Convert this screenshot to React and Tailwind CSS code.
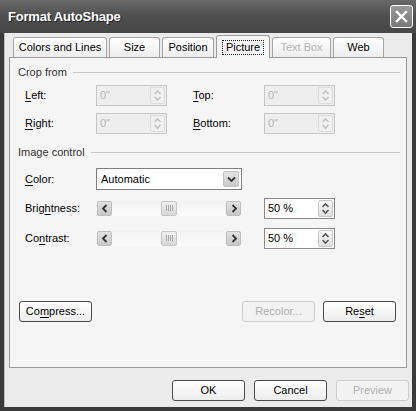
import React from 'react';

const font = { fontFamily: '"Liberation Sans", Arial, sans-serif' };

function Acc({ text, i }) {
  // underline the access key letter at index i
  return (
    <span>
      {text.slice(0, i)}
      <span className="underline underline-offset-2">{text[i]}</span>
      {text.slice(i + 1)}
    </span>
  );
}

function Spinner({ disabled }) {
  const c = disabled ? '#c4c4c4' : '#555';
  return (
    <div className={`w-[15px] h-full flex flex-col items-center justify-center rounded-[2px] border ${disabled ? 'border-[#dcdcdc] bg-[#f0f0f0]' : 'border-[#c9c9c9] bg-gradient-to-b from-[#fafafa] to-[#dedede]'}`}>
      <svg width="9" height="13" viewBox="0 0 9 13">
        <path d="M1.5 5 L4.5 2 L7.5 5" fill="none" stroke={c} strokeWidth="1.6" />
        <path d="M1.5 8 L4.5 11 L7.5 8" fill="none" stroke={c} strokeWidth="1.6" />
      </svg>
    </div>
  );
}

function SpinBox({ value, disabled }) {
  return (
    <div className={`w-[71px] h-[21px] flex items-center border pl-[3px] pr-[1px] py-[1px] ${disabled ? 'border-[#c6c6c6] bg-[#eeeeee] text-[#b4b4b4]' : 'border-[#8a8a8a] bg-white text-black'}`}>
      <span className="flex-1 text-[11px] leading-none">{value}</span>
      <Spinner disabled={disabled} />
    </div>
  );
}

function Arrow({ dir }) {
  return (
    <div className="w-[15px] h-[15px] flex items-center justify-center rounded-[2px] border border-[#bdbdbd] bg-gradient-to-b from-[#e2e2e2] to-[#c8c8c8]">
      <svg width="8" height="9" viewBox="0 0 8 9">
        <path d={dir === 'l' ? 'M5.5 1 L2 4.5 L5.5 8' : 'M2.5 1 L6 4.5 L2.5 8'} fill="none" stroke="#333" strokeWidth="1.8" />
      </svg>
    </div>
  );
}

function Slider() {
  return (
    <div className="w-[144px] h-[15px] flex items-center bg-gradient-to-b from-[#f2f2f2] to-[#fbfbfb]">
      <Arrow dir="l" />
      <div className="flex-1 h-full flex items-center pl-[49px]">
        <div className="w-[16px] h-[15px] rounded-[2px] border border-[#c6c6c6] bg-gradient-to-b from-[#f0f0f0] to-[#d6d6d6] flex items-center justify-center gap-[1px]">
          <span className="w-px h-[6px] bg-[#a8a8a8]" />
          <span className="w-px h-[6px] bg-[#a8a8a8]" />
          <span className="w-px h-[6px] bg-[#a8a8a8]" />
          <span className="w-px h-[6px] bg-[#a8a8a8]" />
        </div>
      </div>
      <Arrow dir="r" />
    </div>
  );
}

function Button({ children, disabled }) {
  return (
    <div className={`w-[73px] h-[21px] flex items-center justify-center rounded-[3px] border text-[11px] ${disabled ? 'border-[#cdcdcd] text-[#b0b0b0] bg-[#f2f2f2]' : 'border-[#4a4a4a] text-black bg-gradient-to-b from-white to-[#ececec]'}`}>
      {children}
    </div>
  );
}

function Tab({ label, w, disabled }) {
  return (
    <div className={`h-[20px] flex items-center justify-center border border-b-0 border-[#a5a5a5] rounded-t-[3px] bg-gradient-to-b from-white to-[#ededed] ${disabled ? 'text-[#b3b3b3]' : 'text-black'}`} style={{ width: w }}>
      {label}
    </div>
  );
}

function Group({ title }) {
  return (
    <div className="flex items-center h-[14px] pl-[8px] pr-[6px] text-[#333]">
      <span className="mr-[6px]">{title}</span>
      <div className="flex-1 h-px bg-[#c8c8c8]" />
    </div>
  );
}

export default function App() {
  return (
    <div className="w-[416px] h-[411px] flex flex-col bg-[#3a3a3a] text-[11px] text-black overflow-hidden" style={font}>
      {/* Title bar */}
      <div className="h-[33px] flex items-center justify-between pl-[8px] pr-[3px] bg-gradient-to-b from-[#6a6a6a] via-[#4e4e4e] to-[#474747]">
        <span className="text-white font-bold text-[13px] tracking-[-0.2px]" style={{ textShadow: '1px 1px 0 #222' }}>Format AutoShape</span>
        <div className="w-[23px] h-[23px] rounded-[3px] border border-white bg-gradient-to-b from-[#9a9a9a] to-[#777] flex items-center justify-center">
          <svg width="13" height="13" viewBox="0 0 13 13">
            <path d="M2 2 L11 11 M11 2 L2 11" stroke="white" strokeWidth="2.4" strokeLinecap="square" />
          </svg>
        </div>
      </div>

      {/* Body */}
      <div className="flex-1 mx-[4px] mb-[4px] bg-[#ebebeb] flex flex-col border-l border-[#bdbdbd]">
        {/* Tabs */}
        <div className="flex items-end gap-[2px] pl-[8px] pt-[2px] h-[24px]">
          <Tab label="Colors and Lines" w={94} />
          <Tab label="Size" w={51} />
          <Tab label="Position" w={52} />
          <div className="w-[54px] h-[23px] -mb-px flex items-center justify-center border border-b-0 border-[#9a9a9a] rounded-t-[3px] bg-[#f5f5f5] relative z-10">
            <span className="border border-dotted border-[#222] px-[3px] leading-[13px]">Picture</span>
          </div>
          <Tab label="Text Box" w={59} disabled />
          <Tab label="Web" w={51} />
        </div>

        {/* Panel */}
        <div className="ml-[4px] mr-[5px] h-[311px] border border-[#9a9a9a] bg-[#f5f5f5] flex flex-col pt-[7px]">
          <Group title="Crop from" />
          <div className="flex items-center h-[21px] mt-[6px]">
            <span className="w-[86px] pl-[15px]"><Acc text="Left:" i={0} /></span>
            <SpinBox value={'0"'} disabled />
            <span className="w-[97px] pl-[26px]"><Acc text="Top:" i={0} /></span>
            <SpinBox value={'0"'} disabled />
          </div>
          <div className="flex items-center h-[21px] mt-[7px]">
            <span className="w-[86px] pl-[15px]"><Acc text="Right:" i={0} /></span>
            <SpinBox value={'0"'} disabled />
            <span className="w-[97px] pl-[26px]"><Acc text="Bottom:" i={0} /></span>
            <SpinBox value={'0"'} disabled />
          </div>

          <div className="mt-[11px]">
            <Group title="Image control" />
          </div>
          <div className="flex items-center h-[22px] mt-[9px]">
            <span className="w-[86px] pl-[15px]"><Acc text="Color:" i={0} /></span>
            <div className="w-[146px] h-[22px] flex items-center border border-[#7f7f7f] bg-white pl-[4px] pr-[2px] py-[2px]">
              <span className="flex-1">Automatic</span>
              <div className="w-[16px] h-full flex items-center justify-center rounded-[2px] border border-[#c3c3c3] bg-gradient-to-b from-[#e4e4e4] to-[#c9c9c9]">
                <svg width="9" height="7" viewBox="0 0 9 7">
                  <path d="M1 1.5 L4.5 5 L8 1.5" fill="none" stroke="#333" strokeWidth="1.8" />
                </svg>
              </div>
            </div>
          </div>
          <div className="flex items-center h-[20px] mt-[8px]">
            <span className="w-[87px] pl-[15px]"><Acc text="Brightness:" i={4} /></span>
            <Slider />
            <div className="w-[23px]" />
            <SpinBox value="50 %" />
          </div>
          <div className="flex items-center h-[20px] mt-[10px]">
            <span className="w-[87px] pl-[15px]"><Acc text="Contrast:" i={2} /></span>
            <Slider />
            <div className="w-[23px]" />
            <SpinBox value="50 %" />
          </div>

          <div className="flex items-center mt-[53px] pl-[9px]">
            <Button><Acc text="Compress..." i={2} /></Button>
            <div className="w-[150px]" />
            <Button disabled>Recolor...</Button>
            <div className="w-[8px]" />
            <Button><Acc text="Reset" i={2} /></Button>
          </div>
        </div>

        {/* Footer buttons */}
        <div className="flex items-center justify-end gap-[9px] mt-[12px] pr-[3px]">
          <Button>OK</Button>
          <Button>Cancel</Button>
          <Button disabled>Preview</Button>
        </div>
      </div>
    </div>
  );
}
